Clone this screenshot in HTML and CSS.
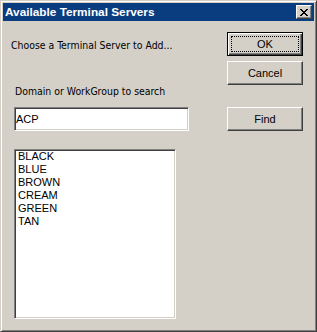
FILE: index.html
```html
<!DOCTYPE html>
<html lang="en">
<head>
    <meta charset="UTF-8">
    <title>Available Terminal Servers</title>
    <link rel="stylesheet" href="styles.css">
</head>
<body>
    <div class="window">
        <div class="titlebar">
            <span class="title">Available Terminal Servers</span>
            <button class="close" type="button">
                <svg width="8" height="7" viewBox="0 0 8 7">
                    <path d="M0 0h2v1H0zM6 0h2v1H6zM1 1h2v1H1zM5 1h2v1H5zM2 2h4v1H2zM3 3h2v1H3zM2 4h4v1H2zM1 5h2v1H1zM5 5h2v1H5zM0 6h2v1H0zM6 6h2v1H6z" fill="#000"/>
                </svg>
            </button>
        </div>

        <div class="dialog">
            <div class="main">
                <div class="label label-first">Choose a Terminal Server to Add...</div>
                <div class="label label-domain">Domain or WorkGroup to search</div>
                <input class="field" type="text" value="ACP">
                <ul class="list">
                    <li>BLACK</li>
                    <li>BLUE</li>
                    <li>BROWN</li>
                    <li>CREAM</li>
                    <li>GREEN</li>
                    <li>TAN</li>
                </ul>
            </div>
            <div class="actions">
                <button class="btn btn-default" type="button"><span class="focus">OK</span></button>
                <button class="btn btn-cancel" type="button">Cancel</button>
                <button class="btn btn-find" type="button">Find</button>
            </div>
        </div>
    </div>
</body>
</html>
```

FILE: styles.css
```css
body {
    margin: 0;
    padding: 0;
    background-color: #d4d0c8;
    font-family: 'Liberation Sans', Arial, sans-serif;
    font-size: 11px;
    color: #000;
}
.window {
    box-sizing: border-box;
    width: 317px;
    height: 332px;
    padding: 2px;
    background-color: #d4d0c8;
    border: 1px solid;
    border-color: #d4d0c8 #404040 #404040 #d4d0c8;
    box-shadow: inset 1px 1px #fff, inset -1px -1px #808080;
}
.titlebar {
    display: flex;
    align-items: center;
    justify-content: space-between;
    height: 18px;
    padding: 0 2px 0 2px;
    background-color: #0a3d7f;
}
.title {
    color: #fff;
    font-weight: bold;
    font-size: 11.8px;
}
.close {
    box-sizing: border-box;
    display: flex;
    align-items: center;
    justify-content: center;
    width: 16px;
    height: 14px;
    padding: 0;
    background-color: #d4d0c8;
    border: 1px solid;
    border-color: #fff #404040 #404040 #fff;
    box-shadow: inset -1px -1px #808080;
}
.dialog {
    display: flex;
}
.main {
    flex: 1;
    display: flex;
    flex-direction: column;
    align-items: flex-start;
}
.label {
    font-family: 'DejaVu Sans Condensed', sans-serif;
    font-size: 10.4px;
    line-height: 13px;
    white-space: nowrap;
}
.label-first {
    margin: 18px 0 0 8px;
}
.label-domain {
    margin: 33px 0 0 12px;
}
.field {
    box-sizing: border-box;
    width: 175px;
    height: 24px;
    margin: 9px 0 0 11px;
    padding: 0 1px;
    font-family: inherit;
    font-size: 11px;
    color: #000;
    background-color: #fff;
    border: 1px solid;
    border-color: #808080 #fff #fff #808080;
    box-shadow: inset 1px 1px #404040, inset -1px -1px #d4d0c8;
    outline: none;
}
.list {
    box-sizing: border-box;
    width: 162px;
    height: 170px;
    margin: 18px 0 0 11px;
    padding: 0 2px;
    list-style: none;
    background-color: #fff;
    border: 1px solid;
    border-color: #808080 #fff #fff #808080;
    box-shadow: inset 1px 1px #404040, inset -1px -1px #d4d0c8;
}
.list li {
    line-height: 13px;
    padding-left: 1px;
}
.actions {
    display: flex;
    flex-direction: column;
    margin-right: 11px;
}
.btn {
    box-sizing: border-box;
    width: 76px;
    height: 24px;
    padding: 0;
    font-family: inherit;
    font-size: 11px;
    color: #000;
    background-color: #d4d0c8;
    border: 1px solid;
    border-color: #fff #404040 #404040 #fff;
    box-shadow: inset -1px -1px #808080;
}
.btn-default {
    margin-top: 11px;
    padding: 3px;
    border: 1px solid #000;
    box-shadow: inset 1px 1px #fff, inset -1px -1px #404040, inset -2px -2px #808080;
}
.focus {
    display: flex;
    align-items: center;
    justify-content: center;
    height: 100%;
    box-sizing: border-box;
    border: 1px dotted #000;
}
.btn-cancel {
    margin-top: 5px;
}
.btn-find {
    margin-top: 22px;
}
```
